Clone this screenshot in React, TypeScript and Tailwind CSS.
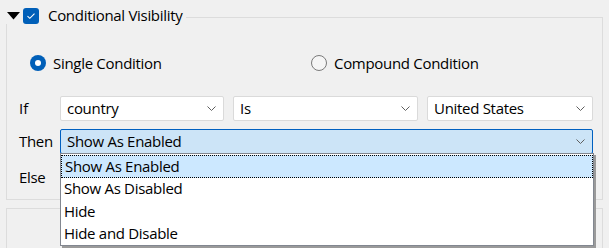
const font = { fontFamily: '"Open Sans", "Noto Sans", sans-serif' };

function Chevron() {
  return (
    <svg width="9" height="5" viewBox="0 0 9 5" className="shrink-0">
      <path d="M0.5 0.5 L4.5 4.5 L8.5 0.5" fill="none" stroke="#5f5f5f" strokeWidth="1" />
    </svg>
  );
}

function Combo({ label, width }: { label: string; width: string }) {
  return (
    <div
      className={`flex h-[25px] items-center justify-between rounded-[2px] border border-[#dadada] bg-white pl-[6px] pr-[7px] ${width}`}
    >
      <span className="text-[15px] leading-none tracking-[-0.3px] text-black">{label}</span>
      <Chevron />
    </div>
  );
}

const options = ["Show As Enabled", "Show As Disabled", "Hide", "Hide and Disable"];

export default function App() {
  return (
    <div className="relative h-[248px] w-[609px] overflow-hidden bg-[#f0f0f0]" style={font}>
      <div className="relative mx-[6px] mt-[17px] h-[183px] border border-[#dcdcdc]">
        {/* legend */}
        <div className="absolute -top-[10px] -left-[3px] flex items-center bg-[#f0f0f0] pr-[4px]">
          <svg width="13" height="8" viewBox="0 0 13 8" className="mr-[3px] ml-[3px]">
            <path d="M0 0 L13 0 L6.5 7.5 Z" fill="#000" />
          </svg>
          <div className="flex h-[16px] w-[16px] items-center justify-center rounded-[3px] bg-[#005fb8]">
            <svg width="10" height="8" viewBox="0 0 10 8">
              <path d="M1.5 4.2 L3.8 6.3 L8.5 1.6" fill="none" stroke="#fff" strokeWidth="1.1" />
            </svg>
          </div>
          <span className="ml-[9px] -mt-[1px] text-[15px] leading-none tracking-[-0.3px] text-black">
            Conditional Visibility
          </span>
        </div>

        {/* radios */}
        <div className="mt-[37px] flex items-center">
          <div className="ml-[23px] flex w-[280px] items-center">
            <div className="flex h-[16px] w-[16px] items-center justify-center rounded-full bg-[#005fb8]">
              <div className="h-[6px] w-[6px] rounded-full bg-white" />
            </div>
            <span className="ml-[7px] text-[15px] leading-none tracking-[-0.3px] text-black">
              Single Condition
            </span>
          </div>
          <div className="ml-[1px] flex items-center">
            <div className="h-[16px] w-[16px] rounded-full border border-[#7a7a7a] bg-[#f5f5f5]" />
            <span className="ml-[7px] text-[15px] leading-none tracking-[-0.3px] text-black">
              Compound Condition
            </span>
          </div>
        </div>

        {/* If row */}
        <div className="mt-[25px] flex items-center">
          <span className="w-[53px] pl-[12px] text-[15px] leading-none text-black">If</span>
          <div className="flex gap-[9px]">
            <Combo label="country" width="w-[164px]" />
            <Combo label="Is" width="w-[185px]" />
            <Combo label="United States" width="w-[166px]" />
          </div>
        </div>

        {/* Then row */}
        <div className="relative mt-[8px] flex items-center">
          <span className="w-[53px] pl-[12px] text-[15px] leading-none tracking-[-0.3px] text-black">Then</span>
          <div className="flex h-[25px] w-[533px] items-center justify-between rounded-[2px] border border-[#0060c0] bg-[#cce4f7] pl-[6px] pr-[7px]">
            <span className="text-[15px] leading-none tracking-[-0.3px] text-black">Show As Enabled</span>
            <Chevron />
          </div>
        </div>

        {/* Else row */}
        <div className="mt-[16px] flex items-center">
          <span className="w-[53px] pl-[12px] text-[15px] leading-none tracking-[-0.3px] text-black">Else</span>
        </div>

        {/* open dropdown list */}
        <div className="absolute top-[135px] left-[53px] z-10 h-[93px] w-[534px] border border-[#828790] bg-white pt-[1px] shadow-[2px_2px_0_#9a9a9a]">
          {options.map((o, i) => (
            <div
              key={o}
              className={`flex h-[22.5px] items-center pl-[3px] text-[15px] leading-none tracking-[-0.3px] text-black ${
                i === 0 ? "border border-dotted border-black bg-[#cce8ff] pl-[2px]" : ""
              }`}
            >
              {o}
            </div>
          ))}
        </div>
      </div>

      <div className="mx-[6px] mt-[8px] h-[60px] border border-[#dcdcdc]" />
    </div>
  );
}
